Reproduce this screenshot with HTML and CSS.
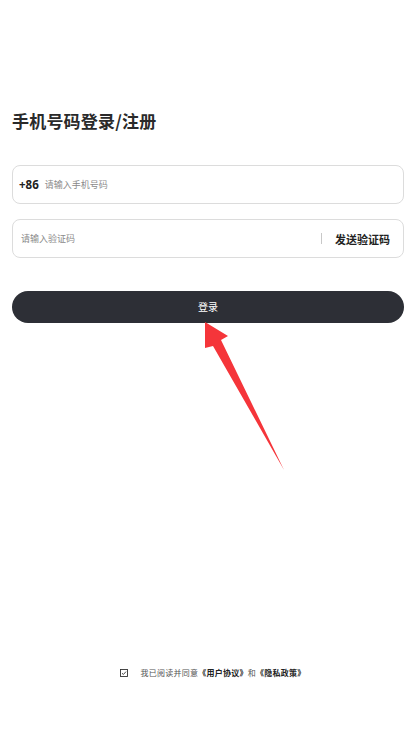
FILE: index.html
```html
<!DOCTYPE html>
<html lang="zh">
<head>
<meta charset="utf-8">
<link rel="stylesheet" href="styles.css">
</head>
<body>
<div class="page">
  <h1 class="title">手机号码登录/注册</h1>
  <div class="field">
    <span class="prefix">+86</span>
    <span class="ph">请输入手机号码</span>
  </div>
  <div class="field field-code">
    <span class="ph ph-code">请输入验证码</span>
    <span class="divider"></span>
    <span class="send">发送验证码</span>
  </div>
  <button class="login">登录</button>
  <div class="spacer"></div>
  <div class="agree">
    <svg class="check" width="8" height="8" viewBox="0 0 8 8"><rect x="0.5" y="0.5" width="7" height="7" fill="none" stroke="#333" stroke-width="0.9"/><path d="M2 4.2 L3.4 5.5 L6 2.6" fill="none" stroke="#333" stroke-width="0.9"/></svg>
    <span class="agree-text">我已阅读并同意<b>《用户协议》</b>和<b>《隐私政策》</b></span>
  </div>
</div>
<svg class="arrow" width="416" height="741" viewBox="0 0 416 741">
  <polygon points="205,322 228,336 221,340 284,470 213,346 205,348" fill="#f5353a"/>
</svg>
</body>
</html>
```
FILE: styles.css
```css
html, body {
  margin: 0;
  padding: 0;
  background: #fff;
}
body {
  font-family: "Noto Sans CJK SC", "Noto Sans", sans-serif;
  color: #222;
}
.page {
  height: 741px;
  box-sizing: border-box;
  padding: 109px 12px 0;
  display: flex;
  flex-direction: column;
}
.title {
  margin: 0 0 32px;
  font-size: 17px;
  line-height: 24px;
  font-weight: 700;
  color: #2a2a2a;
  letter-spacing: 0.2px;
}
.field {
  height: 37px;
  border: 1px solid #dcdcdc;
  border-radius: 8px;
  display: flex;
  align-items: center;
  padding: 0 13px 0 6px;
  margin-bottom: 15px;
}
.prefix {
  font-size: 11.5px;
  font-weight: 700;
  color: #222;
  margin-right: 6px;
  font-family: "Noto Sans", sans-serif;
}
.ph {
  font-size: 9px;
  color: #8a8a8a;
}
.ph-code {
  margin-left: 2px;
  flex: 1;
}
.divider {
  width: 1px;
  height: 11px;
  background: #c8c8c8;
  margin-right: 13px;
}
.send {
  font-size: 11px;
  font-weight: 700;
  color: #222;
}
.login {
  margin-top: 18px;
  height: 32px;
  border: none;
  border-radius: 16px;
  background: #2d2f36;
  color: #fff;
  font-family: "Noto Sans CJK SC", sans-serif;
  font-size: 10px;
  padding: 0 0 2px;
}
.spacer {
  flex: 1;
}
.agree {
  display: flex;
  align-items: center;
  justify-content: center;
  margin-bottom: 63px;
  font-size: 8px;
  letter-spacing: 0.25px;
  color: #555;
  padding-left: 9px;
}
.check {
  margin-right: 13px;
}
.agree-text b {
  font-weight: 700;
  color: #222;
}
.arrow {
  position: absolute;
  left: 0;
  top: 0;
  pointer-events: none;
}
```
